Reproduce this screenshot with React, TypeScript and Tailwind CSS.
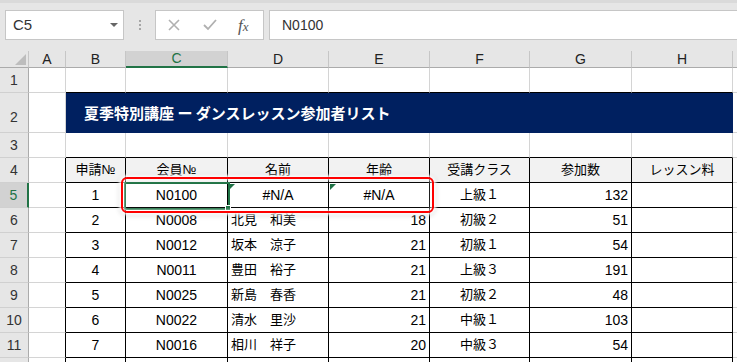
import React from 'react';

const FONT = { fontFamily: '"Liberation Sans", "Noto Sans CJK JP", sans-serif' };

const WIDTHS = ['w-[37px]', 'w-[60px]', 'w-[102px]', 'w-[101px]', 'w-[101px]', 'w-[100px]', 'w-[102px]', 'w-[101px]'];
const LETTERS = ['A', 'B', 'C', 'D', 'E', 'F', 'G', 'H'];

const HEAD = ['申請№', '会員№', '名前', '年齢', '受講クラス', '参加数', 'レッスン料'];

const DATA = [
  ['2', 'N0008', '北見　和美', '18', '初級２', '51'],
  ['3', 'N0012', '坂本　涼子', '21', '初級１', '54'],
  ['4', 'N0011', '豊田　裕子', '21', '上級３', '191'],
  ['5', 'N0025', '新島　春香', '21', '初級２', '48'],
  ['6', 'N0022', '清水　里沙', '21', '中級１', '103'],
  ['7', 'N0016', '相川　祥子', '20', '中級３', '54'],
];

function RowHead({ n, selected, tall }: { n?: number; selected?: boolean; tall?: boolean }) {
  return (
    <div
      className={`w-[29px] shrink-0 flex items-center justify-center border-b border-[#d0d0d0] text-[14px] ${
        tall ? 'pt-[10px]' : ''
      } ${
        selected
          ? 'bg-[#d2d2d2] text-[#217346] border-r-2 border-r-[#217346]'
          : 'bg-[#e6e6e6] text-[#333] border-r border-r-[#ababab]'
      }`}
    >
      {n}
    </div>
  );
}

function Rest() {
  return <div className="flex-1 border-b border-[#d4d4d4]" />;
}

function ErrMark() {
  return (
    <span className="absolute left-[1px] top-[1px] w-0 h-0 border-t-[6px] border-t-[#1e7145] border-r-[6px] border-r-transparent" />
  );
}

function BlankRow({ n, topOfTable, topOfTitle }: { n: number; topOfTable?: boolean; topOfTitle?: boolean }) {
  return (
    <div className="flex h-[25px]">
      <RowHead n={n} />
      {WIDTHS.map((w, i) => (
        <div
          key={i}
          className={`${w} shrink-0 border-r border-b border-[#d4d4d4] ${
            i > 0 && (topOfTable || topOfTitle) ? 'border-b-black' : ''
          }`}
        />
      ))}
      <Rest />
    </div>
  );
}

function TableRow({
  n,
  cells,
  aligns,
  cjk,
  head,
  selected,
  err,
}: {
  n?: number;
  cells: string[];
  aligns: string[];
  cjk: boolean[];
  head?: boolean;
  selected?: boolean;
  err?: boolean;
}) {
  return (
    <div className="flex h-[25px]">
      <RowHead n={n} selected={selected} />
      <div className="w-[37px] shrink-0 border-r border-r-black border-b border-b-[#d4d4d4]" />
      {cells.map((t, i) => (
        <div
          key={i}
          className={`${WIDTHS[i + 1]} shrink-0 relative flex items-center px-[3px] border-r border-b border-black text-black ${
            head ? 'bg-[#f2f2f2]' : 'bg-white'
          } ${aligns[i] === 'r' ? 'justify-end' : aligns[i] === 'l' ? 'justify-start' : 'justify-center'} ${
            cjk[i] ? 'text-[13px]' : 'text-[14px]'
          }`}
        >
          {err && (i === 2 || i === 3) && <ErrMark />}
          <span className="whitespace-pre">{t}</span>
        </div>
      ))}
      <Rest />
    </div>
  );
}

export default function App() {
  return (
    <div className="relative w-[737px] h-[362px] overflow-hidden bg-white" style={FONT}>
      {/* formula bar */}
      <div className="h-[51px] bg-[#e6e6e6] border-t-[3px] border-[#dadada] pt-[7px]">
        <div className="flex h-[30px]">
          <div className="ml-[5px] w-[119px] bg-white border border-[#c6c6c6] flex items-center justify-between pl-[7px] pr-[5px]">
            <span className="text-[15px] text-[#333]">C5</span>
            <span className="w-0 h-0 border-l-[4px] border-r-[4px] border-t-[4px] border-l-transparent border-r-transparent border-t-[#666]" />
          </div>
          <div className="w-[31px] flex flex-col items-center justify-center gap-[2px] pl-[1px]">
            <span className="w-[2px] h-[2px] bg-[#a6a6a6]" />
            <span className="w-[2px] h-[2px] bg-[#a6a6a6]" />
            <span className="w-[2px] h-[2px] bg-[#a6a6a6]" />
          </div>
          <div className="w-[109px] bg-white border border-[#c6c6c6] flex items-center">
            <svg width="12" height="12" viewBox="0 0 12 12" className="ml-[12px]">
              <path d="M1 1 L11 11 M11 1 L1 11" stroke="#b0b0b0" strokeWidth="1.6" />
            </svg>
            <svg width="14" height="12" viewBox="0 0 14 12" className="ml-[23px]">
              <path d="M1 6 L5 10 L13 1" stroke="#b0b0b0" strokeWidth="1.8" fill="none" />
            </svg>
            <span
              className="ml-[21px] text-[17px] italic text-[#555] leading-none"
              style={{ fontFamily: '"Liberation Serif", serif' }}
            >
              f<span className="text-[13px]">x</span>
            </span>
          </div>
          <div className="ml-[5px] flex-1 bg-white border-y border-l border-[#c6c6c6] flex items-center pl-[12px]">
            <span className="text-[14px] text-[#333]">N0100</span>
          </div>
        </div>
      </div>

      {/* column headers */}
      <div className="flex h-[17px] bg-[#e6e6e6]">
        <div className="w-[29px] shrink-0 relative border-r border-[#c6c6c6] border-b border-b-[#ababab]">
          <span className="absolute right-[2px] bottom-[2px] w-0 h-0 border-l-[11px] border-l-transparent border-b-[11px] border-b-[#bdbdbd]" />
        </div>
        {WIDTHS.map((w, i) =>
          i === 2 ? (
            <div
              key={i}
              className={`${w} shrink-0 flex items-center justify-center bg-[#d2d2d2] text-[#217346] text-[14px] border-r border-r-[#c6c6c6] border-b-2 border-b-[#217346]`}
            >
              {LETTERS[i]}
            </div>
          ) : (
            <div
              key={i}
              className={`${w} shrink-0 flex items-center justify-center text-[#222] text-[14px] border-r border-r-[#c6c6c6] border-b border-b-[#ababab]`}
            >
              {LETTERS[i]}
            </div>
          )
        )}
        <div className="flex-1 border-b border-[#ababab]" />
      </div>

      {/* sheet */}
      <BlankRow n={1} topOfTitle />
      <div className="flex h-[40px]">
        <RowHead n={2} tall />
        <div className="w-[37px] shrink-0 border-r border-b border-[#d4d4d4]" />
        <div className="w-[667px] shrink-0 bg-[#002060] flex items-center pl-[18px]">
          <span className="text-white font-bold text-[15px]" style={{ fontFamily: '"Noto Sans CJK JP", sans-serif' }}>
            夏季特別講座 ー ダンスレッスン参加者リスト
          </span>
        </div>
        <Rest />
      </div>
      <BlankRow n={3} topOfTable />
      <TableRow
        n={4}
        head
        cells={HEAD}
        aligns={['c', 'c', 'c', 'c', 'c', 'c', 'c']}
        cjk={[true, true, true, true, true, true, true]}
      />
      <TableRow
        n={5}
        selected
        err
        cells={['1', 'N0100', '#N/A', '#N/A', '上級１', '132', '']}
        aligns={['c', 'c', 'c', 'c', 'c', 'r', 'c']}
        cjk={[false, false, false, false, true, false, false]}
      />
      {DATA.map((r, i) => (
        <TableRow
          key={i}
          n={6 + i}
          cells={[...r, '']}
          aligns={['c', 'c', 'l', 'r', 'c', 'r', 'c']}
          cjk={[false, false, true, false, true, false, false]}
        />
      ))}
      <TableRow cells={['', '', '', '', '', '', '']} aligns={['c', 'c', 'c', 'c', 'c', 'c', 'c']} cjk={[false, false, false, false, false, false, false]} />

      {/* selection on C5 */}
      <div className="absolute left-[124px] top-[182px] w-[106px] h-[28px] border-2 border-[#217346]" />
      <div className="absolute left-[225px] top-[205px] w-[6px] h-[6px] bg-[#217346] border border-white" />

      {/* red highlight frame */}
      <div className="absolute left-[121px] top-[177px] w-[313px] h-[36px] rounded-[6px] border-2 border-[#f00] shadow-[0_0_3px_2px_rgba(255,255,255,0.85),0_1px_5px_2px_rgba(0,0,0,0.12),inset_0_0_3px_1px_rgba(255,255,255,0.85)]" />
    </div>
  );
}
